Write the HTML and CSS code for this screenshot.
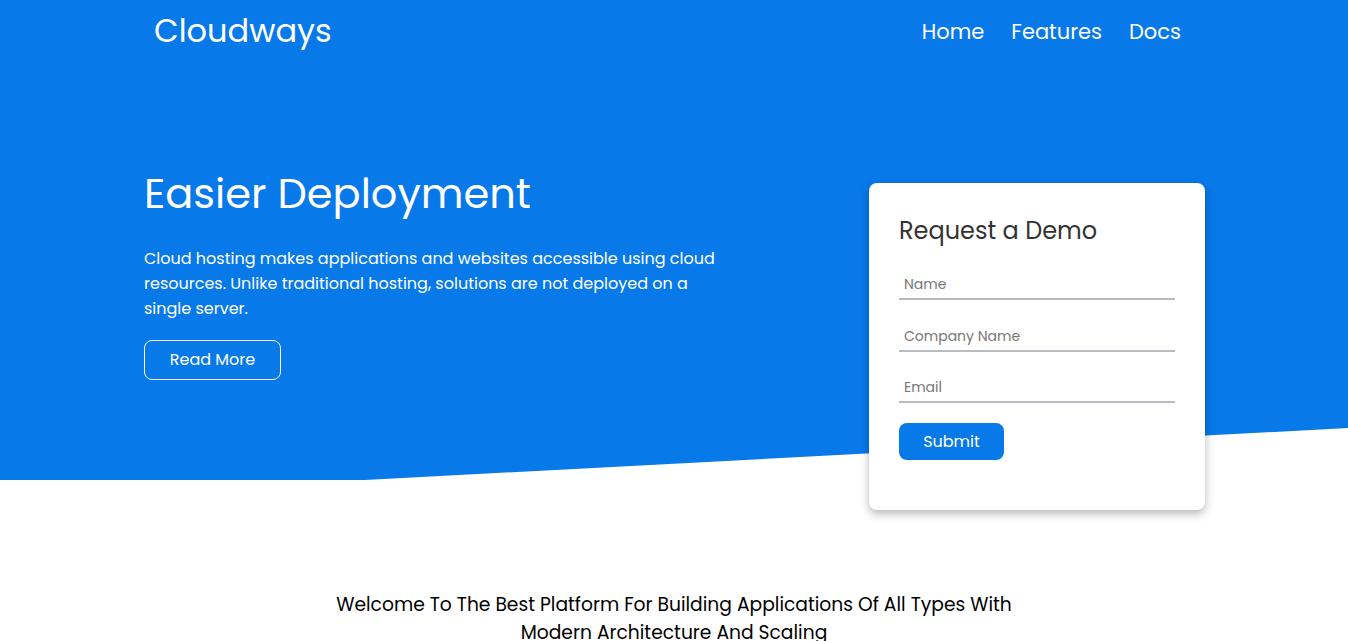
FILE: index.html
```html
<!DOCTYPE html>
<html lang="en">
<head>
<meta charset="utf-8">
<title>Cloudways</title>
<link rel="stylesheet" href="styles.css">
</head>
<body>
<header class="hero">
  <nav class="nav">
    <a class="logo" href="#">Cloudways</a>
    <ul class="menu">
      <li><a href="#">Home</a></li>
      <li><a href="#">Features</a></li>
      <li><a href="#">Docs</a></li>
    </ul>
  </nav>
  <div class="hero-body">
    <div class="hero-text">
      <h1>Easier Deployment</h1>
      <p>Cloud hosting makes applications and websites accessible using cloud resources. Unlike traditional hosting, solutions are not deployed on a single server.</p>
      <a class="btn-outline" href="#">Read More</a>
    </div>
    <form class="card">
      <h2>Request a Demo</h2>
      <input class="field" type="text" placeholder="Name">
      <input class="field" type="text" placeholder="Company Name">
      <input class="field" type="email" placeholder="Email">
      <button class="btn-submit" type="button">Submit</button>
    </form>
  </div>
</header>
<section class="welcome">
  <h3>Welcome To The Best Platform For Building Applications Of All Types With Modern Architecture And Scaling</h3>
</section>
</body>
</html>
```

FILE: styles.css
```css
* { box-sizing: border-box; }
html, body { margin: 0; padding: 0; }
body {
  font-family: "Poppins", "Open Sans", "Noto Sans", sans-serif;
  background: #fff;
  color: #111;
}
.hero {
  position: relative;
  isolation: isolate;
  height: 480px;
  color: #fff;
}
.hero::before {
  content: "";
  position: absolute;
  left: 0;
  top: 0;
  width: 100%;
  height: 480px;
  background: #0779e9;
  clip-path: polygon(0 0, 100% 0, 100% 428px, 365px 480px, 0 480px);
  z-index: -1;
}
.nav {
  width: 1060px;
  margin: 0 auto;
  height: 62px;
  display: flex;
  align-items: center;
  justify-content: space-between;
  padding: 0 23px 0 10px;
}
.logo {
  color: #fff;
  text-decoration: none;
  font-size: 32px;
  font-weight: 400;
}
.menu {
  list-style: none;
  margin: 0;
  padding: 0;
  display: flex;
  gap: 27px;
}
.menu a {
  color: #fff;
  text-decoration: none;
  font-size: 21px;
}
.hero-body {
  width: 1060px;
  margin: 0 auto;
  display: flex;
  justify-content: space-between;
  align-items: flex-start;
  padding-top: 102px;
}
.hero-text { width: 590px; }
.hero-text h1 {
  font-size: 41.5px;
  font-weight: 400;
  margin: 0;
  line-height: 60px;
}
.hero-text p {
  font-size: 16px;
  line-height: 25px;
  margin: 22px 0 19px;
}
.btn-outline {
  display: inline-block;
  border: 1px solid #fff;
  border-radius: 8px;
  color: #fff;
  text-decoration: none;
  font-size: 16px;
  width: 137px;
  height: 40px;
  line-height: 38px;
  text-align: center;
}
.card {
  width: 336px;
  height: 327px;
  margin-top: 19px;
  margin-right: -1px;
  background: #fff;
  border-radius: 8px;
  box-shadow: 0 4px 10px rgba(0, 0, 0, 0.28);
  padding: 30px 30px;
  display: flex;
  flex-direction: column;
  align-items: stretch;
}
.card h2 {
  font-size: 24px;
  font-weight: 400;
  color: #333;
  margin: 0 0 16px;
  line-height: 36px;
}
.field {
  display: block;
  width: 100%;
  height: 35px;
  border: none;
  border-bottom: 2px solid #b7bcc3;
  padding: 6px 5px 0;
  font-family: inherit;
  font-size: 14px;
  color: #333;
  outline: none;
  margin-bottom: 16.5px;
  background: transparent;
}
.field::placeholder { color: #777; }
.btn-submit {
  align-self: flex-start;
  margin-top: 3px;
  width: 105px;
  height: 37px;
  border: none;
  border-radius: 8px;
  background: #0779e9;
  color: #fff;
  font-family: inherit;
  font-size: 16px;
  cursor: pointer;
}
.welcome {
  text-align: center;
  padding-top: 111px;
}
.welcome h3 {
  width: 720px;
  margin: 0 auto;
  font-size: 18.7px;
  font-weight: 400;
  line-height: 28px;
  color: #000;
}
```
